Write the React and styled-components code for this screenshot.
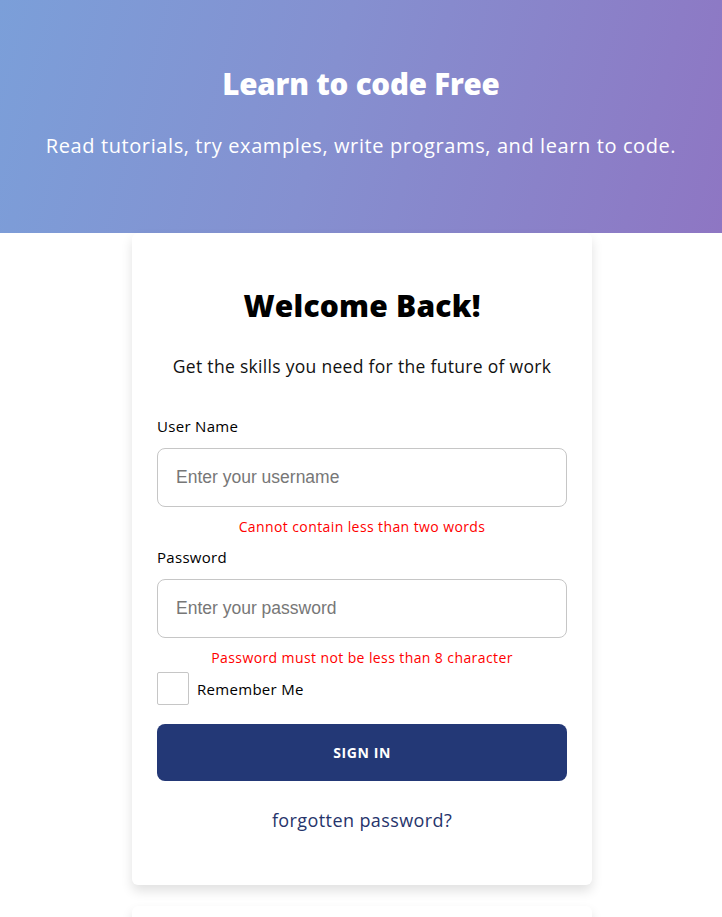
import React from "react";
import styled, { createGlobalStyle } from "styled-components";

const GlobalStyle = createGlobalStyle`
  body {
    margin: 0;
    background: #ffffff;
    font-family: "Open Sans", "Noto Sans", sans-serif;
  }
  * {
    box-sizing: border-box;
  }
`;

const App = () => {
  return (
    <Page>
      <GlobalStyle />
      <Hero>
        <HeroTitle>Learn to code Free</HeroTitle>
        <HeroText>
          Read tutorials, try examples, write programs, and learn to code.
        </HeroText>
      </Hero>
      <CardStack>
        <Card>
          <CardTitle>Welcome Back!</CardTitle>
          <CardSub>Get the skills you need for the future of work</CardSub>
          <Label>User Name</Label>
          <Input placeholder="Enter your username" />
          <ErrorText>Cannot contain less than two words</ErrorText>
          <Label>Password</Label>
          <Input type="password" placeholder="Enter your password" />
          <ErrorText>Password must not be less than 8 character</ErrorText>
          <CheckRow>
            <CheckBox />
            <CheckLabel>Remember Me</CheckLabel>
          </CheckRow>
          <SignInButton>SIGN IN</SignInButton>
          <ForgotLink>forgotten password?</ForgotLink>
        </Card>
        <Card $short />
      </CardStack>
    </Page>
  );
};

const Page = styled.div`
  width: 100%;
  min-height: 100vh;
  display: flex;
  flex-direction: column;
`;
const Hero = styled.header`
  height: 233px;
  display: flex;
  flex-direction: column;
  align-items: center;
  padding-top: 63px;
  background: linear-gradient(
    105deg,
    #7b9fd9 0%,
    #8590d0 45%,
    #8e76c3 100%
  );
  color: #ffffff;
`;
const HeroTitle = styled.h1`
  margin: 0;
  font-size: 29.5px;
  font-weight: 800;
  letter-spacing: -0.2px;
`;
const HeroText = styled.p`
  margin: 28px 0 0;
  font-size: 20px;
  font-weight: 400;
  letter-spacing: 0.6px;
`;
const CardStack = styled.div`
  display: flex;
  flex-direction: column;
  align-items: center;
  gap: 21px;
  padding-left: 2px;
`;
const Card = styled.section`
  width: 460px;
  height: ${(p) => (p.$short ? "60px" : "auto")};
  background: #ffffff;
  border-radius: 6px;
  box-shadow: 0 6px 12px rgba(0, 0, 0, 0.12);
  padding: 52px 25px 53px;
  display: flex;
  flex-direction: column;
`;
const CardTitle = styled.h2`
  margin: 0;
  text-align: center;
  font-size: 30px;
  font-weight: 800;
  letter-spacing: 0.2px;
  color: #000000;
`;
const CardSub = styled.p`
  margin: 28px 0 0;
  text-align: center;
  font-size: 17.5px;
  letter-spacing: 0.3px;
  color: #111111;
`;
const Label = styled.label`
  margin-top: 38px;
  font-size: 15px;
  letter-spacing: 0.3px;
  color: #000000;
  & ~ & {
    margin-top: 11px;
  }
`;
const Input = styled.input`
  margin-top: 12px;
  height: 59px;
  width: 100%;
  border: 1px solid #c6c6c6;
  border-radius: 8px;
  padding: 0 18px;
  font-family: "Liberation Sans", Arial, sans-serif;
  font-size: 17.5px;
  outline: none;
  &::placeholder {
    color: #777777;
  }
`;
const ErrorText = styled.div`
  margin-top: 10px;
  text-align: center;
  font-size: 14px;
  letter-spacing: 0.4px;
  color: #ff0000;
`;
const CheckRow = styled.div`
  margin-top: 5px;
  display: flex;
  align-items: center;
  gap: 8px;
`;
const CheckBox = styled.span`
  width: 32px;
  height: 33px;
  border: 1px solid #c6c6c6;
  border-radius: 2px;
`;
const CheckLabel = styled.span`
  font-size: 15px;
  letter-spacing: 0.3px;
  color: #000000;
`;
const SignInButton = styled.button`
  margin-top: 19px;
  height: 57px;
  width: 100%;
  border: none;
  border-radius: 8px;
  background: #233876;
  color: #ffffff;
  font-family: "Open Sans", sans-serif;
  font-weight: 700;
  font-size: 14px;
  letter-spacing: 0.6px;
`;
const ForgotLink = styled.a`
  margin-top: 27px;
  text-align: center;
  font-size: 18px;
  letter-spacing: 0.4px;
  color: #26346b;
`;

export default App;
